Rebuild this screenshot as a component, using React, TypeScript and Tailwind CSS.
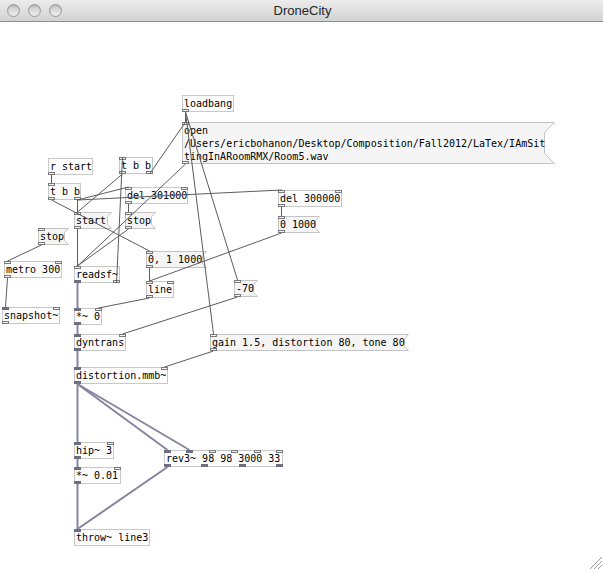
import React from "react";

type Port = "s" | "c";
type N = {
  id: string;
  x: number;
  y: number;
  w: number;
  h?: number;
  t: string[];
  msg?: boolean;
  i: Port[];
  o: Port[];
};

const TOP = 22;

const nodes: N[] = [
  { id: "loadbang", x: 182, y: 95, w: 52, t: ["loadbang"], i: [], o: ["c"] },
  {
    id: "open",
    x: 182,
    y: 122,
    w: 363,
    h: 42,
    msg: true,
    t: [
      "open",
      "/Users/ericbohanon/Desktop/Composition/Fall2012/LaTex/IAmSit",
      "tingInARoomRMX/Room5.wav",
    ],
    i: ["c"],
    o: ["c"],
  },
  { id: "rstart", x: 48, y: 158, w: 45, t: ["r start"], i: [], o: ["c"] },
  { id: "tbbL", x: 48, y: 183, w: 33, t: ["t b b"], i: ["c"], o: ["c", "c"] },
  { id: "tbbU", x: 119, y: 157, w: 34, t: ["t b b"], i: ["c"], o: ["c", "c"] },
  { id: "del301", x: 125, y: 187, w: 63, t: ["del 301000"], i: ["c", "c"], o: ["c"] },
  { id: "start", x: 74, y: 212, w: 34, t: ["start"], msg: true, i: ["c"], o: ["c"] },
  { id: "stopR", x: 125, y: 212, w: 27, t: ["stop"], msg: true, i: ["c"], o: ["c"] },
  { id: "stopL", x: 38, y: 228, w: 27, t: ["stop"], msg: true, i: ["c"], o: ["c"] },
  { id: "metro", x: 4, y: 261, w: 58, t: ["metro 300"], i: ["c", "c"], o: ["c"] },
  { id: "snap", x: 2, y: 307, w: 58, t: ["snapshot~"], i: ["s", "c"], o: ["c"] },
  { id: "readsf", x: 74, y: 266, w: 46, t: ["readsf~"], i: ["c"], o: ["s", "c"] },
  { id: "m01", x: 146, y: 251, w: 57, t: ["0, 1 1000"], msg: true, i: ["c"], o: ["c"] },
  { id: "line", x: 146, y: 281, w: 28, t: ["line"], i: ["c", "c"], o: ["c"] },
  { id: "mul0", x: 74, y: 308, w: 28, t: ["*~ 0"], i: ["s", "c"], o: ["s"] },
  { id: "del300", x: 278, y: 190, w: 64, t: ["del 300000"], i: ["c", "c"], o: ["c"] },
  { id: "m0", x: 278, y: 216, w: 38, t: ["0 1000"], msg: true, i: ["c"], o: ["c"] },
  { id: "m70", x: 234, y: 280, w: 20, t: ["-70"], msg: true, i: ["c"], o: ["c"] },
  { id: "dyn", x: 74, y: 334, w: 52, t: ["dyntrans"], i: ["s", "c"], o: ["s"] },
  {
    id: "gain",
    x: 210,
    y: 334,
    w: 195,
    t: ["gain 1.5, distortion 80, tone 80"],
    msg: true,
    i: ["c"],
    o: ["c"],
  },
  { id: "dist", x: 74, y: 367, w: 94, t: ["distortion.mmb~"], i: ["s", "c"], o: ["s"] },
  { id: "hip", x: 74, y: 442, w: 40, t: ["hip~ 3"], i: ["s", "c"], o: ["s"] },
  { id: "mul001", x: 74, y: 467, w: 47, t: ["*~ 0.01"], i: ["s", "c"], o: ["s"] },
  {
    id: "rev3",
    x: 164,
    y: 450,
    w: 119,
    t: ["rev3~ 98 98 3000 33"],
    i: ["s", "s", "c", "c", "c", "c"],
    o: ["s", "s", "s", "s"],
  },
  { id: "throw", x: 74, y: 529, w: 76, t: ["throw~ line3"], i: ["s"], o: [] },
];

const byId: Record<string, N> = {};
nodes.forEach((n) => (byId[n.id] = n));

type C = [string, number, string, number, Port];
const conns: C[] = [
  ["loadbang", 0, "open", 0, "c"],
  ["loadbang", 0, "m70", 0, "c"],
  ["loadbang", 0, "gain", 0, "c"],
  ["tbbU", 1, "open", 0, "c"],
  ["tbbU", 0, "start", 0, "c"],
  ["open", 0, "readsf", 0, "c"],
  ["rstart", 0, "tbbL", 0, "c"],
  ["tbbL", 0, "m01", 0, "c"],
  ["tbbL", 1, "start", 0, "c"],
  ["tbbL", 1, "del301", 0, "c"],
  ["tbbL", 1, "del300", 0, "c"],
  ["readsf", 1, "tbbU", 0, "c"],
  ["del301", 0, "stopR", 0, "c"],
  ["stopR", 0, "readsf", 0, "c"],
  ["start", 0, "readsf", 0, "c"],
  ["stopL", 0, "metro", 0, "c"],
  ["metro", 0, "snap", 0, "c"],
  ["del300", 0, "m0", 0, "c"],
  ["m0", 0, "line", 0, "c"],
  ["m01", 0, "line", 0, "c"],
  ["line", 0, "mul0", 1, "c"],
  ["readsf", 0, "mul0", 0, "s"],
  ["mul0", 0, "dyn", 0, "s"],
  ["m70", 0, "dyn", 1, "c"],
  ["dyn", 0, "dist", 0, "s"],
  ["gain", 0, "dist", 1, "c"],
  ["dist", 0, "hip", 0, "s"],
  ["dist", 0, "rev3", 0, "s"],
  ["dist", 0, "rev3", 1, "s"],
  ["hip", 0, "mul001", 0, "s"],
  ["mul001", 0, "throw", 0, "s"],
  ["rev3", 0, "throw", 0, "s"],
];

const H = (n: N) => n.h ?? 17;
const portX = (n: N, idx: number, count: number) =>
  n.x + (count > 1 ? Math.round((idx * (n.w - 7)) / (count - 1)) : 0);

function PdNode({ n }: { n: N }) {
  const h = H(n);
  const c = Math.min(10, Math.floor(h / 4));
  return (
    <div
      className="absolute"
      style={{ left: n.x, top: n.y - TOP, width: n.w, height: h }}
    >
      {n.msg ? (
        <svg
          className="absolute left-0 top-0 overflow-visible"
          width={n.w + c + 1}
          height={h + 1}
        >
          <polygon
            points={`0.5,0.5 ${n.w + c - 0.5},0.5 ${n.w - 0.5},${c + 0.5} ${n.w - 0.5},${h - c - 0.5} ${n.w + c - 0.5},${h - 0.5} 0.5,${h - 0.5}`}
            fill="#f5f5f5"
            stroke="#c4c4c4"
            strokeWidth={1}
          />
        </svg>
      ) : (
        <div className="absolute inset-0 border border-[#c8c8c8] bg-[#fdfdfd]" />
      )}
      <div className="absolute left-[2px] top-[2px] whitespace-pre text-[10px] leading-[13px] text-black font-['DejaVu_Sans_Mono',monospace]">
        {n.t.map((l, k) => (
          <div key={k}>{l}</div>
        ))}
      </div>
      {n.i.map((p, k) => (
        <div
          key={"i" + k}
          className={
            p === "s"
              ? "absolute top-0 h-[3px] w-[7px] bg-[#6e6e80]"
              : "absolute top-0 h-[3px] w-[7px] border border-[#7a7a7a] bg-[#f2f2f2]"
          }
          style={{ left: portX(n, k, n.i.length) - n.x }}
        />
      ))}
      {n.o.map((p, k) => (
        <div
          key={"o" + k}
          className={
            p === "s"
              ? "absolute bottom-0 h-[3px] w-[7px] bg-[#6e6e80]"
              : "absolute bottom-0 h-[3px] w-[7px] border border-[#7a7a7a] bg-[#f2f2f2]"
          }
          style={{ left: portX(n, k, n.o.length) - n.x }}
        />
      ))}
    </div>
  );
}

function Light() {
  return (
    <div className="h-[13px] w-[13px] rounded-full border border-[#9a9a9a] bg-gradient-to-b from-[#c8c8c8] to-[#eeeeee] shadow-[inset_0_1px_1px_rgba(0,0,0,0.15)]" />
  );
}

export default function App() {
  return (
    <div className="flex h-[570px] w-[603px] flex-col overflow-hidden bg-white">
      <div className="relative flex h-[22px] shrink-0 items-center border-b border-[#8e8e8e] bg-gradient-to-b from-[#ececec] to-[#d2d2d2]">
        <div className="flex gap-[8px] pl-[7px]">
          <Light />
          <Light />
          <Light />
        </div>
        <div className="absolute inset-0 flex items-center justify-center pl-[2px] text-[13px] text-[#262626] font-['Liberation_Sans',Arial,sans-serif]">
          DroneCity
        </div>
      </div>
      <div className="relative flex-1">
        {nodes.map((n) => (
          <PdNode key={n.id} n={n} />
        ))}
        <svg className="pointer-events-none absolute inset-0" width={603} height={548}>
          {conns.map(([a, ao, b, bi, t], k) => {
            const na = byId[a];
            const nb = byId[b];
            const x1 = portX(na, ao, na.o.length) + 3.5;
            const y1 = na.y + H(na) - TOP;
            const x2 = portX(nb, bi, nb.i.length) + 3.5;
            const y2 = nb.y - TOP;
            return (
              <line
                key={k}
                x1={x1}
                y1={y1}
                x2={x2}
                y2={y2}
                stroke={t === "s" ? "#8585a0" : "#5c5c5c"}
                strokeWidth={t === "s" ? 2 : 1}
              />
            );
          })}
          <g stroke="#9a9a9a" strokeWidth={1}>
            <line x1={590} y1={547} x2={602} y2={535} />
            <line x1={594} y1={547} x2={602} y2={539} />
            <line x1={598} y1={547} x2={602} y2={543} />
          </g>
        </svg>
      </div>
    </div>
  );
}
